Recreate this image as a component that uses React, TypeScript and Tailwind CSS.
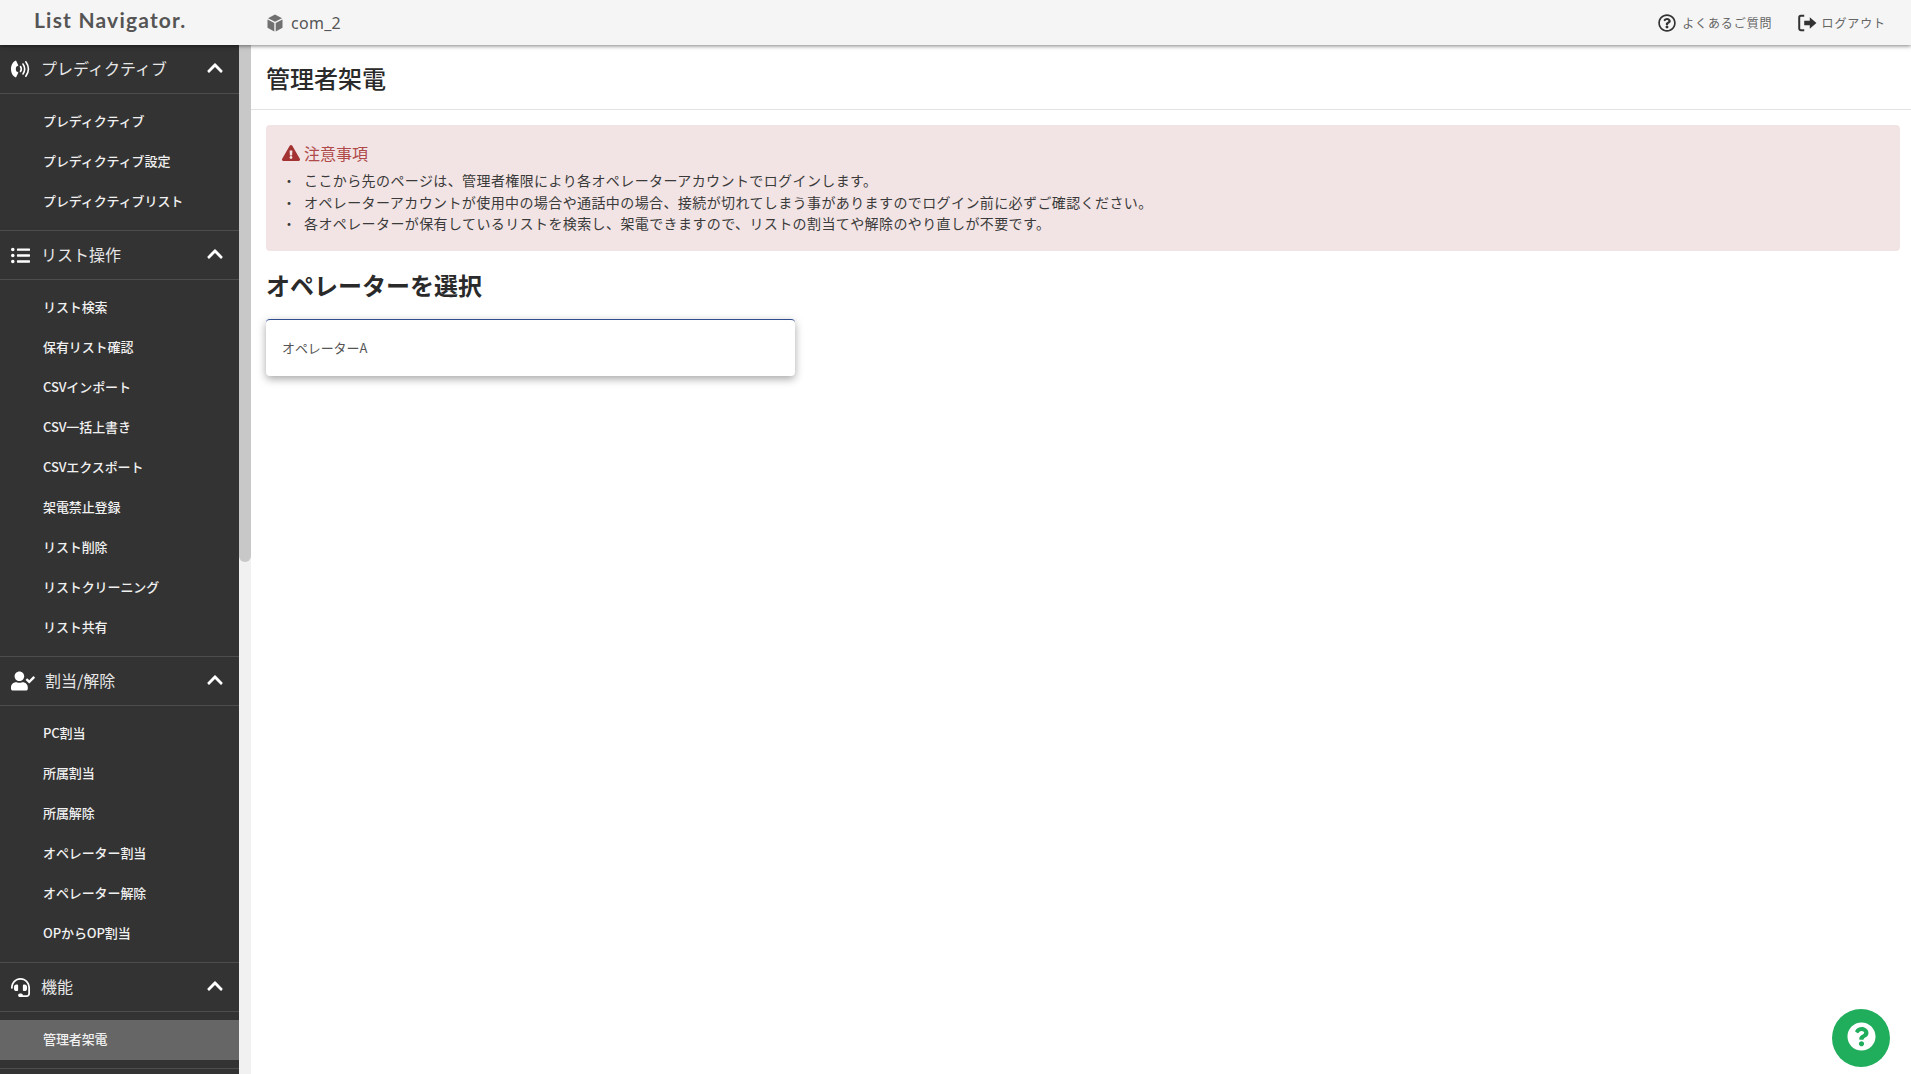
import {
  FaListUl,
  FaUserCheck,
  FaHeadset,
  FaRegQuestionCircle,
  FaExclamationTriangle,
  FaQuestionCircle,
  FaChevronUp,
} from "react-icons/fa";
import type { ReactNode } from "react";

function PhoneIcon() {
  return (
    <svg viewBox="0 0 20 20" className="w-[20px] h-[20px]">
      <path
        fill="currentColor"
        d="M6 1.5C3 2.5 1 6 1 10s2 7.5 5 8.5l2.4-5-2.1-1.2c-.6-1.3-.6-3.3 0-4.6l2.1-1.2z"
      />
      <g fill="none" stroke="currentColor" strokeWidth="1.6" strokeLinecap="round">
        <path d="M10.5 7.5c1 1.5 1 3.5 0 5" />
        <path d="M13 5c2 3 2 7 0 10" />
        <path d="M15.8 2.8c3.2 4.4 3.2 10 0 14.4" />
      </g>
    </svg>
  );
}

function CubeIcon() {
  return (
    <svg viewBox="0 0 16 18" className="w-[16px] h-[18px] text-[#707070]">
      <g fill="currentColor">
        <polygon points="8,0.5 15,4.2 8,7.8 1,4.2" />
        <polygon points="0.5,5.4 7.3,9 7.3,17.5 0.5,13.8" />
        <polygon points="15.5,5.4 8.7,9 8.7,17.5 15.5,13.8" />
      </g>
    </svg>
  );
}

function LogoutIcon() {
  return (
    <svg viewBox="0 0 18 18" className="ml-[25px] w-[20px] h-[20px] text-[#333333]">
      <path
        d="M6.5 2.5H3.5A1.5 1.5 0 0 0 2 4v10a1.5 1.5 0 0 0 1.5 1.5h3"
        fill="none"
        stroke="currentColor"
        strokeWidth="1.8"
      />
      <path fill="currentColor" d="M6.5 7h5V3.8L17.5 9l-6 5.2V11h-5z" />
    </svg>
  );
}

const sections: { title: string; icon: ReactNode; iconBox: string; items: string[] }[] = [
  {
    title: "プレディクティブ",
    icon: <PhoneIcon />,
    iconBox: "w-[31px]",
    items: ["プレディクティブ", "プレディクティブ設定", "プレディクティブリスト"],
  },
  {
    title: "リスト操作",
    icon: <FaListUl className="ml-[1px] w-[19px] h-[19px]" />,
    iconBox: "w-[31px]",
    items: [
      "リスト検索",
      "保有リスト確認",
      "CSVインポート",
      "CSV一括上書き",
      "CSVエクスポート",
      "架電禁止登録",
      "リスト削除",
      "リストクリーニング",
      "リスト共有",
    ],
  },
  {
    title: "割当/解除",
    icon: <FaUserCheck className="ml-[1px] w-[24px] h-[20px]" />,
    iconBox: "w-[35px]",
    items: ["PC割当", "所属割当", "所属解除", "オペレーター割当", "オペレーター解除", "OPからOP割当"],
  },
  {
    title: "機能",
    icon: <FaHeadset className="ml-[1px] w-[19px] h-[19px]" />,
    iconBox: "w-[31px]",
    items: ["管理者架電"],
  },
];

const notes = [
  "ここから先のページは、管理者権限により各オペレーターアカウントでログインします。",
  "オペレーターアカウントが使用中の場合や通話中の場合、接続が切れてしまう事がありますのでログイン前に必ずご確認ください。",
  "各オペレーターが保有しているリストを検索し、架電できますので、リストの割当てや解除のやり直しが不要です。",
];

function Sidebar() {
  return (
    <aside className="w-[239px] shrink-0 bg-[#333333] text-[#f0f0f0] overflow-hidden">
      {sections.map((section) => (
        <div key={section.title}>
          <div className="h-[49px] flex items-center pl-[10px] pr-[15px] border-b border-[#4d4d4d] text-[#e6e6e6]">
            <span className={`${section.iconBox} shrink-0 flex text-white`}>{section.icon}</span>
            <span className="text-[16px] leading-[24px] pb-[2px] flex-1">{section.title}</span>
            <FaChevronUp className="mb-[2px] w-[18px] h-[18px] text-white" />
          </div>
          <ul className="py-2 border-b border-[#4d4d4d]">
            {section.items.map((item) => (
              <li
                key={item}
                className={`h-10 flex items-center pl-[43px] pb-[2px] text-[13px] font-medium tracking-[-0.1px] ${
                  item === "管理者架電" ? "bg-[#666666]" : ""
                }`}
              >
                {item}
              </li>
            ))}
          </ul>
        </div>
      ))}
    </aside>
  );
}

export default function App() {
  return (
    <div className="h-screen flex flex-col overflow-hidden bg-white text-[#333333] font-['Noto_Sans_CJK_JP','Noto_Sans',sans-serif]">
      {/* Header */}
      <header className="h-[45px] shrink-0 z-10 flex items-center bg-[#f5f5f5] shadow-[0_1px_4px_rgba(0,0,0,0.5)] text-[#555555]">
        <div className="w-[267px] pl-[34px] pb-[5px] font-['Lato',sans-serif] font-bold text-[21px] leading-[30px] tracking-[1.2px]">
          List Navigator.
        </div>
        <CubeIcon />
        <span className="ml-[8px] text-[16px] leading-[24px] tracking-[0.3px] font-['Noto_Sans',sans-serif]">com_2</span>
        <div className="ml-auto flex items-center pr-[25px] text-[12px] tracking-[0.9px] text-[#666666]">
          <FaRegQuestionCircle className="w-[18px] h-[18px] text-[#333333]" />
          <span className="ml-[6px]">よくあるご質問</span>
          <LogoutIcon />
          <span className="ml-[4px]">ログアウト</span>
        </div>
      </header>

      <div className="flex flex-1 min-h-0">
        <Sidebar />

        {/* Scrollbar */}
        <div className="w-[12px] shrink-0 bg-[#f1f1f1]">
          <div className="h-[517px] bg-[#c8c8c8] rounded-b-md" />
        </div>

        <main className="flex-1 min-w-0">
          <div className="h-[65px] flex items-center pl-[15px] border-b border-[#e2e2e2]">
            <h1 className="text-[24px] leading-[32px] font-medium text-[#2a2a2a] pt-[2px]">管理者架電</h1>
          </div>

          <div className="pl-[15px] pr-[11px]">
            {/* Notice */}
            <section className="mt-[15px] h-[126px] rounded bg-[#f2e4e4] px-[16px] pt-[17px]">
              <div className="flex items-center h-[22px] text-[#b04a4a] text-[16px]">
                <FaExclamationTriangle className="w-[18px] h-[16px] text-[#a33333]" />
                <span className="ml-[4px]">注意事項</span>
              </div>
              <ul className="mt-[6px] text-[14px] leading-[21.5px] tracking-[0.4px] text-[#3a3a3a]">
                {notes.map((note) => (
                  <li key={note} className="flex">
                    <span className="w-[22px] shrink-0">・</span>
                    <span>{note}</span>
                  </li>
                ))}
              </ul>
            </section>

            <h2 className="mt-[17px] text-[24px] leading-[34px] font-bold text-[#2a2a2a]">オペレーターを選択</h2>

            {/* Operator card */}
            <div className="mt-[17px] w-[529px] h-[57px] flex items-center px-[16px] bg-white rounded-[4px] border-t border-[#2f4f8f] shadow-[0_3px_8px_rgba(0,0,0,0.35)] text-[13px] text-[#555555] tracking-[-0.1px]">
              オペレーターA
            </div>
          </div>
        </main>
      </div>

      {/* Help button */}
      <button className="fixed right-[21px] bottom-[7px] w-[58px] h-[58px] rounded-full bg-[#20ad5c] flex items-center justify-center pb-[3px]">
        <FaQuestionCircle className="w-[29px] h-[29px] text-white" />
      </button>
    </div>
  );
}
